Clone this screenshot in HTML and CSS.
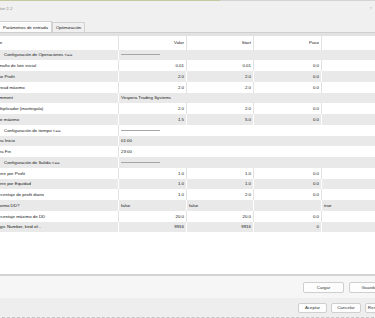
FILE: index.html
```html
<!DOCTYPE html>
<html lang="es">
<head>
    <meta charset="UTF-8">
    <meta name="viewport" content="width=device-width, initial-scale=1.0">
    <title>Propiedades del experto</title>
    <link rel="stylesheet" href="styles.css">
</head>
<body>

<div class="window">
    <div class="edge"></div>

    <div class="titlebar">
        <span class="title">tor 2.2</span>
        <span class="help">?</span>
    </div>

    <div class="tabs">
        <div class="tab active">Parámetros de entrada</div>
        <div class="tab">Optimización</div>
    </div>
    <div class="band"></div>

    <div class="grid">
        <div class="row head">
            <div class="cell name">Variable</div>
            <div class="cell num">Valor</div>
            <div class="cell num">Start</div>
            <div class="cell num">Paso</div>
            <div class="cell num">Stop</div>
        </div>
        <div class="row">
            <div class="cell name group">Configuración de Operaciones &lt;==</div>
            <div class="cell wide"><span class="rule"></span></div>
        </div>
        <div class="row">
            <div class="cell name">Tamaño de lote inicial</div>
            <div class="cell num">0.01</div>
            <div class="cell num">0.01</div>
            <div class="cell num">0.0</div>
            <div class="cell num"></div>
        </div>
        <div class="row">
            <div class="cell name">Take Profit</div>
            <div class="cell num">2.0</div>
            <div class="cell num">2.0</div>
            <div class="cell num">0.0</div>
            <div class="cell num"></div>
        </div>
        <div class="row">
            <div class="cell name">Spread máximo</div>
            <div class="cell num">2.0</div>
            <div class="cell num">2.0</div>
            <div class="cell num">0.0</div>
            <div class="cell num"></div>
        </div>
        <div class="row">
            <div class="cell name">Comment</div>
            <div class="cell wide">Vespera Trading Systems</div>
        </div>
        <div class="row">
            <div class="cell name">Multiplicador (martingala)</div>
            <div class="cell num">2.0</div>
            <div class="cell num">2.0</div>
            <div class="cell num">0.0</div>
            <div class="cell num"></div>
        </div>
        <div class="row">
            <div class="cell name">Lote máximo</div>
            <div class="cell num">1.5</div>
            <div class="cell num">5.0</div>
            <div class="cell num">0.0</div>
            <div class="cell num"></div>
        </div>
        <div class="row">
            <div class="cell name group">Configuración de tiempo &lt;==</div>
            <div class="cell wide"><span class="rule"></span></div>
        </div>
        <div class="row">
            <div class="cell name">Hora Inicio</div>
            <div class="cell wide">01:00</div>
        </div>
        <div class="row">
            <div class="cell name">Hora Fin</div>
            <div class="cell wide">23:00</div>
        </div>
        <div class="row">
            <div class="cell name group">Configuración de Salida &lt;==</div>
            <div class="cell wide"><span class="rule"></span></div>
        </div>
        <div class="row">
            <div class="cell name">Cierre por Profit</div>
            <div class="cell num">1.0</div>
            <div class="cell num">1.0</div>
            <div class="cell num">0.0</div>
            <div class="cell num"></div>
        </div>
        <div class="row">
            <div class="cell name">Cierre por Equidad</div>
            <div class="cell num">1.0</div>
            <div class="cell num">1.0</div>
            <div class="cell num">0.0</div>
            <div class="cell num"></div>
        </div>
        <div class="row">
            <div class="cell name">Porcentaje de profit diario</div>
            <div class="cell num">1.0</div>
            <div class="cell num">2.0</div>
            <div class="cell num">0.0</div>
            <div class="cell num"></div>
        </div>
        <div class="row">
            <div class="cell name">Máximo DD?</div>
            <div class="cell">false</div>
            <div class="cell">false</div>
            <div class="cell"></div>
            <div class="cell">true</div>
        </div>
        <div class="row">
            <div class="cell name">Porcentaje máximo de DD</div>
            <div class="cell num">20.0</div>
            <div class="cell num">20.0</div>
            <div class="cell num">0.0</div>
            <div class="cell num"></div>
        </div>
        <div class="row">
            <div class="cell name">Magic Number, kind of...</div>
            <div class="cell num">9916</div>
            <div class="cell num">9916</div>
            <div class="cell num">0</div>
            <div class="cell num"></div>
        </div>
    </div>

    <div class="sep"></div>

    <div class="actions">
        <button class="btn wide-btn">Cargar</button>
        <button class="btn wide-btn">Guardar</button>
    </div>

    <div class="footer">
        <button class="btn">Aceptar</button>
        <button class="btn">Cancelar</button>
        <button class="btn">Restablecer</button>
    </div>
</div>

</body>
</html>
```

FILE: styles.css
```css
* {
    box-sizing: border-box;
}

body {
    margin: 0;
    overflow: hidden;
    background-color: #f0f0f0;
    font-family: "Liberation Sans", Arial, sans-serif;
    font-size: 4.4px;
    color: #151515;
}

.window {
    width: 412px;
    height: 318px;
    margin-left: -18px;
    display: flex;
    flex-direction: column;
    background-color: #f0f0f0;
}

.edge {
    height: 1px;
    background: linear-gradient(to right, #c6c8a0 0, #c6c8a0 238px, #d4d4d4 238px);
}

/* barra de titulo */
.titlebar {
    height: 14px;
    display: flex;
    align-items: center;
    justify-content: space-between;
    padding: 0 22px 0 18px;
    color: #8c8c8c;
}

.help {
    color: #b0b0b0;
}

/* pestañas */
.tabs {
    height: 17px;
    display: flex;
    align-items: flex-end;
    padding-left: 17px;
}

.tab {
    height: 10px;
    padding: 0 3px;
    display: flex;
    align-items: center;
    border: 1px solid #d2d2d2;
    border-bottom: none;
    background-color: #f0f0f0;
}

.tab.active {
    height: 11px;
    background-color: #fbfbfb;
}

.band {
    height: 4px;
    border-top: 1px solid #cfcfcf;
    background-color: #e2e2e2;
}

/* tabla de parametros */
.grid {
    height: 238px;
    background-color: #fff;
}

.row {
    display: grid;
    grid-template-columns: 137px 68px 67px 68px 72px;
    height: 10.75px;
}

.row.head {
    height: 13.5px;
}

.row:nth-child(even) {
    background-color: #e9e9e9;
}

.cell {
    display: flex;
    align-items: center;
    padding: 0 2px;
    border-right: 1px solid #e2e2e2;
    white-space: nowrap;
    overflow: hidden;
}

.row:nth-child(even) .cell {
    border-right-color: #fff;
}

.cell.name {
    padding-left: 12px;
}

.cell.name.group {
    padding-left: 22px;
}

.head .cell.name {
    padding-left: 4.4px;
}

.cell.num {
    justify-content: flex-end;
}

.cell.wide {
    grid-column: span 4;
    border-right: none;
}

.rule {
    width: 39px;
    border-top: 1px solid #a6a6a6;
}

.sep {
    height: 2px;
    background-color: #d3d3d3;
}

/* botones */
.actions {
    height: 22px;
    display: flex;
    justify-content: flex-end;
    align-items: center;
    gap: 5px;
    padding-right: 4px;
    background-color: #f6f6f6;
}

.footer {
    height: 20px;
    display: flex;
    justify-content: flex-end;
    align-items: center;
    gap: 4px;
    background-color: #eee;
    border-bottom: 1px dashed #c4c4c4;
}

.btn {
    width: 29px;
    height: 10px;
    padding: 0;
    font: inherit;
    color: #333;
    background-color: #fdfdfd;
    border: 1px solid #cfcfcf;
    border-radius: 2px;
}

.footer .btn:nth-child(2) {
    width: 30px;
}

.btn.wide-btn {
    width: 41px;
    height: 11px;
}
```
